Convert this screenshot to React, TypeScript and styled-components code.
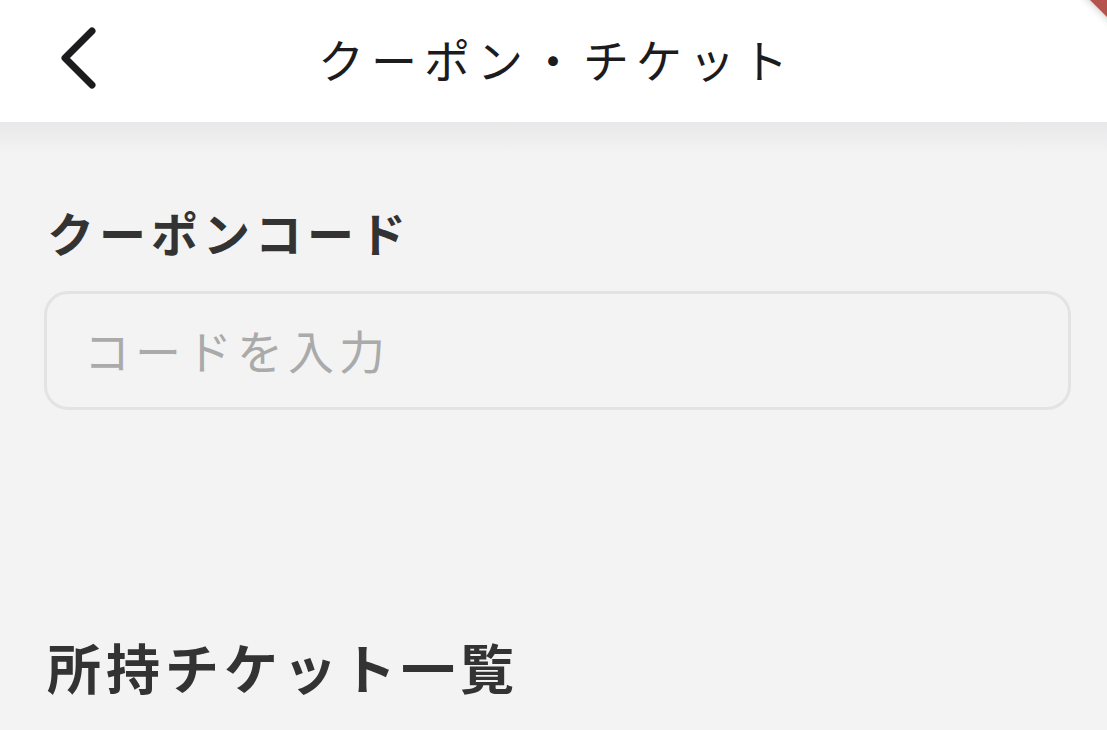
import * as React from 'react'
import styled, { createGlobalStyle } from 'styled-components'

const GlobalStyle = createGlobalStyle`
  html, body {
    margin: 0;
    padding: 0;
    background: #f3f3f3;
    font-family: "Noto Sans CJK JP", "Noto Sans", sans-serif;
  }
`

const Screen = styled.div`
  position: relative;
  width: 1107px;
  height: 730px;
  overflow: hidden;
  background: #f3f3f3;
`

const Header = styled.header`
  position: relative;
  height: 122px;
  background: #ffffff;
  display: flex;
  align-items: center;
  justify-content: center;
`

const HeaderShade = styled.div`
  height: 32px;
  background: linear-gradient(#e8e8ea, #f3f3f3);
`

const BackButton = styled.button`
  position: absolute;
  left: 50px;
  top: 22px;
  width: 60px;
  height: 70px;
  padding: 0;
  border: 0;
  background: none;
  display: flex;
  align-items: center;
  justify-content: center;
`

const Title = styled.h1`
  margin: 0 0 6px 6px;
  font-size: 46px;
  font-weight: 400;
  letter-spacing: 7px;
  color: #1c1c1e;
`

const DebugBanner = styled.div`
  position: absolute;
  top: -8px;
  right: -84px;
  width: 160px;
  height: 24px;
  background: #b5534f;
  transform: rotate(45deg);
  box-shadow: 0 0 8px rgba(0, 0, 0, 0.25);
`

const Body = styled.main`
  padding: 47px 36px 0 44px;
`

const SectionTitle = styled.h2<{ $size: number; $spacing: number }>`
  margin: 0;
  padding-left: 3px;
  font-size: ${p => p.$size}px;
  line-height: 1.3;
  font-weight: 700;
  letter-spacing: ${p => p.$spacing}px;
  color: #333333;
`

const CodeField = styled.input`
  box-sizing: border-box;
  display: block;
  width: 100%;
  height: 119px;
  margin: 29px 0 0;
  padding: 0 37px 4px;
  border: 3px solid #e3e3e3;
  border-radius: 24px;
  background: #f3f3f3;
  font-family: "Noto Sans CJK JP", "Noto Sans", sans-serif;
  font-size: 46px;
  letter-spacing: 5px;
  color: #333333;
  outline: none;

  &::placeholder {
    color: #aaaaaa;
  }
`

const Spacer = styled.div`
  height: 222px;
`

const ChevronLeft = () => (
  <svg width="44" height="64" viewBox="0 0 44 64" fill="none">
    <path
      d="M34 6 L7 33 L34 60"
      stroke="#1c1c1e"
      strokeWidth="7"
      strokeLinecap="round"
      strokeLinejoin="round"
    />
  </svg>
)

const App = () => (
  <Screen>
    <GlobalStyle />
    <Header>
      <BackButton aria-label="戻る">
        <ChevronLeft />
      </BackButton>
      <Title>クーポン・チケット</Title>
    </Header>
    <HeaderShade />
    <Body>
      <SectionTitle $size={47} $spacing={5}>クーポンコード</SectionTitle>
      <CodeField placeholder="コードを入力" />
      <Spacer />
      <SectionTitle $size={54} $spacing={5}>所持チケット一覧</SectionTitle>
    </Body>
    <DebugBanner />
  </Screen>
)

export default App
